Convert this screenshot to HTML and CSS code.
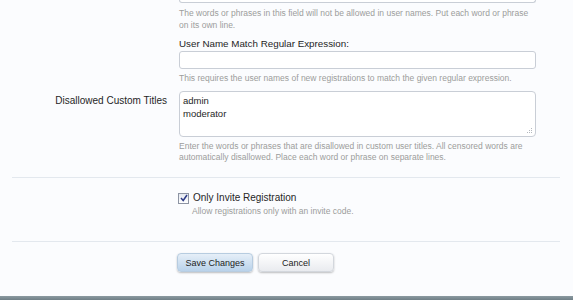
FILE: index.html
```html
<!DOCTYPE html>
<html lang="en">

<head>
    <meta charset="UTF-8">
    <title>Registration Options</title>
    <link rel="stylesheet" href="styles.css">
</head>

<body>
    <div class="page">
        <form class="options-form">
            <!-- username censor (continued from above) -->
            <div class="form-row">
                <div class="row-label"></div>
                <div class="row-control">
                    <div class="box-tail"></div>
                    <p class="hint">The words or phrases in this field will not be allowed in user names. Put each word or phrase on its own line.</p>
                    <div class="sub-title">User Name Match Regular Expression:</div>
                    <input type="text" class="text-input">
                    <p class="hint hint-single">This requires the user names of new registrations to match the given regular expression.</p>
                </div>
            </div>

            <div class="form-row row-titles">
                <label class="row-label" for="titles">Disallowed Custom Titles</label>
                <div class="row-control">
                    <div class="area-wrap">
                        <textarea id="titles" class="text-area">admin
moderator</textarea>
                        <svg class="grip" width="7" height="7" viewBox="0 0 7 7">
                            <rect x="5" y="1" width="1" height="1"/>
                            <rect x="3" y="3" width="1" height="1"/>
                            <rect x="5" y="3" width="1" height="1"/>
                            <rect x="1" y="5" width="1" height="1"/>
                            <rect x="3" y="5" width="1" height="1"/>
                            <rect x="5" y="5" width="1" height="1"/>
                        </svg>
                    </div>
                    <p class="hint hint-after-area">Enter the words or phrases that are disallowed in custom user titles. All censored words are automatically disallowed. Place each word or phrase on separate lines.</p>
                </div>
            </div>

            <div class="form-row row-check">
                <div class="row-label"></div>
                <div class="row-control">
                    <label class="check-label">
                        <span class="check-box">
                            <svg width="8" height="8" viewBox="0 0 8 8"><path d="M1 4 L3.2 6.5 L7 1" fill="none" stroke="#2c3a86" stroke-width="1.5"/></svg>
                        </span>
                        Only Invite Registration
                    </label>
                    <p class="hint check-hint">Allow registrations only with an invite code.</p>
                </div>
            </div>

            <div class="form-row row-submit">
                <div class="row-label"></div>
                <div class="row-control buttons">
                    <button type="submit" class="button primary">Save Changes</button>
                    <button type="reset" class="button">Cancel</button>
                </div>
            </div>
        </form>
    </div>
    <div class="footer-bar"></div>
</body>

</html>
```

FILE: styles.css
```css
:root {
    --page-bg: #fbfcfe;
    --text-color: #262626;
    --hint-color: #9c9c9c;
    --line-color: #e3e8ee;
    --field-border: #c9ced6;
    --main-font: 'Liberation Sans', Arial, sans-serif;
}

body {
    margin: 0;
    background: var(--page-bg);
    font-family: var(--main-font);
    color: var(--text-color);
    height: 300px;
    overflow: hidden;
    display: flex;
    flex-direction: column;
}

.page {
    flex: 1;
    margin: 0 13px 0 12px;
}

.form-row {
    display: flex;
}

.row-label {
    width: 167px;
    flex-shrink: 0;
    text-align: right;
    font-size: 10px;
    padding-right: 12px;
    box-sizing: border-box;
}

.row-control {
    width: 357px;
}

.box-tail {
    height: 2px;
    border: 1px solid var(--field-border);
    border-top: none;
    border-radius: 0 0 4px 4px;
    background: #fff;
}

.hint {
    margin: 4px 0 0;
    font-size: 8.5px;
    line-height: 12px;
    color: var(--hint-color);
}

.sub-title {
    margin-top: 6px;
    font-size: 9.8px;
    line-height: 14px;
    color: #1e1e1e;
}

.text-input {
    display: block;
    width: 100%;
    height: 18px;
    box-sizing: border-box;
    border: 1px solid var(--field-border);
    border-radius: 3px;
    background: #fff;
    margin: 0;
}

.hint-single {
    margin-top: 3px;
}

.row-titles {
    margin-top: 7px;
}

.row-titles .row-label {
    line-height: 20px;
}

.area-wrap {
    position: relative;
}

.text-area {
    display: block;
    width: 100%;
    height: 46px;
    box-sizing: border-box;
    margin: 0;
    padding: 2px 3px;
    border: 1px solid var(--field-border);
    border-radius: 4px;
    background: #fff;
    font-family: var(--main-font);
    font-size: 9.5px;
    line-height: 13px;
    color: var(--text-color);
    resize: none;
}

.grip {
    position: absolute;
    right: 3px;
    bottom: 3px;
    fill: #b4b8be;
}

.hint-after-area {
    margin-top: 4px;
    line-height: 11px;
}

.row-check {
    margin-top: 14px;
    padding-top: 13px;
    border-top: 1px solid var(--line-color);
}

.check-label {
    display: flex;
    align-items: center;
    gap: 4px;
    font-size: 10px;
    line-height: 14px;
    margin-left: -1px;
}

.check-box {
    width: 9px;
    height: 9px;
    border: 1px solid #8d94a3;
    background: linear-gradient(#e4e8f0, #ffffff);
    display: flex;
    align-items: center;
    justify-content: center;
}

.check-hint {
    margin: 0 0 0 13px;
}

.row-submit {
    margin-top: 24px;
    padding-top: 11px;
    border-top: 1px solid var(--line-color);
}

.buttons {
    display: flex;
    gap: 5px;
    margin-left: -2px;
}

.button {
    width: 76px;
    height: 19px;
    border: 1px solid #d3d7dd;
    border-radius: 4px;
    font-family: var(--main-font);
    font-size: 9px;
    color: #222;
    background: linear-gradient(#ffffff, #e9ebef);
    box-shadow: 0 1px 2px rgba(0, 0, 0, 0.25);
    padding: 0;
}

.button.primary {
    border-color: #b7cce0;
    background: linear-gradient(#e6eff8, #b9d2ea);
}

.footer-bar {
    height: 4px;
    background: linear-gradient(#8b9aa1, #6f7f87);
}
```
